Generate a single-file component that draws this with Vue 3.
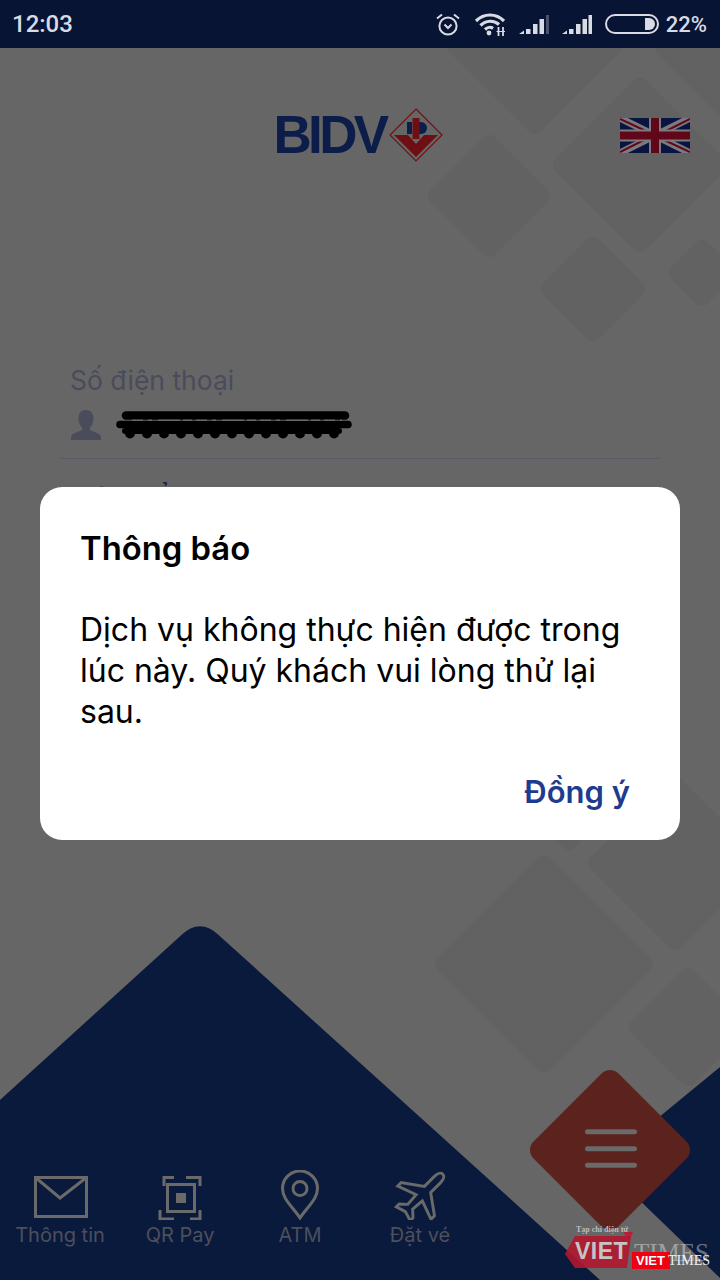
<script setup>
// background tiles: center x, center y, half diagonal
const tiles = [
  [535, 46, 88], [489, 196, 61], [640, 165, 87], [593, 289, 52], [702, 273, 33], [760, 48, 105],
  [544, 964, 109], [675, 863, 87], [688, 1027, 59], [569, 820, 30]
]

function diamond(cx, cy, r) {
  return `${cx},${cy - r} ${cx + r},${cy} ${cx},${cy + r} ${cx - r},${cy}`
}

const tilePoints = tiles.map(([x, y, r]) => diamond(x, y, r - 8))

const navItems = ['Thông tin', 'QR Pay', 'ATM', 'Đặt vé']
</script>

<template>
  <div class="page">
    <!-- decorative background -->
    <svg class="backdrop" width="720" height="1280" viewBox="0 0 720 1280">
      <polygon
        v-for="(pts, i) in tilePoints"
        :key="i"
        :points="pts"
        fill="#626262"
        stroke="#626262"
        stroke-width="16"
        stroke-linejoin="round"
      />
      <path d="M0 1100L182 934.5Q200 918 218 934.5L600 1280H0Z" fill="#0a1a3d" />
      <path d="M720 1067L602 1164L720 1278Z" fill="#0a1a3d" />
    </svg>

    <header class="status">
      <span class="clock">12:03</span>
      <div class="status-icons">
        <svg class="ic-alarm" width="26" height="24" viewBox="0 0 26 24" fill="none" stroke="#d9dbe4" stroke-width="2">
          <circle cx="13" cy="14" r="8.6" />
          <path d="M9.5 12.5L13 16l3.5-3.5" />
          <path d="M2 6.5L7 2.5M24 6.5L19 2.5" />
        </svg>
        <svg class="ic-wifi" width="32" height="24" viewBox="0 0 32 24" fill="none" stroke="#d9dbe4" stroke-width="3.200">
          <path d="M2 9C10 1 22 1 30 9" />
          <path d="M6.500 13.500C12 8 20 8 25 12.500" />
          <path d="M11 17.500C13.500 15 17 15 19 16.500" />
          <circle cx="15" cy="21" r="2.400" fill="#d9dbe4" stroke="none" />
          <path d="M24.500 15v9M29 15v9" stroke-width="1.800" />
          <path d="M22.500 19.500h8.500" stroke-width="1" />
        </svg>
        <svg class="ic-signal" width="30" height="21" viewBox="0 0 30 21">
          <path d="M0 20L5 16.500V20Z M7 15h4.500v5H7Z M14 10h4.500v10H14Z M20.500 5H25v15h-4.500Z" fill="#d9dbe4" />
          <rect x="27" y="1" width="3" height="19" fill="#4a5068" />
        </svg>
        <svg class="ic-signal" width="30" height="21" viewBox="0 0 30 21">
          <path d="M0 20L5 16.500V20Z M7 15h4.500v5H7Z M14 10h4.500v10H14Z M20.500 5H25v15h-4.500Z" fill="#d9dbe4" />
          <rect x="26.500" y="1" width="3.500" height="19" fill="#d9dbe4" />
        </svg>
        <svg class="ic-battery" width="54" height="20" viewBox="0 0 54 20">
          <rect x="1" y="1" width="52" height="18" rx="9" fill="none" stroke="#d9dbe4" stroke-width="2" />
          <path d="M40 4h4a6 6 0 0 1 0 12h-4Z" fill="#d9dbe4" />
        </svg>
        <span class="percent">22%</span>
      </div>
    </header>

    <div class="brand-row">
      <div></div>
      <div class="logo">
        <span class="logo-text">BIDV</span>
        <svg width="54" height="54" viewBox="0 0 54 54">
          <polygon points="27,1 53,27 27,53 1,27" fill="none" stroke="#6e1215" stroke-width="1.200" />
          <polygon points="5,27 19,27 27,36 35,27 49,27 27,49" fill="#6e1013" />
          <path d="M18 14h5v12h-5Z" fill="#0c1d4a" />
          <path d="M30 14h2a6 6 0 0 1 0 12h-2Z" fill="#0c1d4a" />
          <rect x="23.500" y="10" width="7" height="21" fill="#6e1013" />
        </svg>
      </div>
      <svg class="flag" width="70" height="35" viewBox="0 0 70 35">
        <rect width="70" height="35" fill="#0a1440" />
        <path d="M0 0L70 35M70 0L0 35" stroke="#7b7b7f" stroke-width="7" />
        <path d="M0 1L28 14M70 1L44 14M0 34L26 21M70 34L42 21" stroke="#62071a" stroke-width="2" />
        <path d="M35 0V35M0 17.500H70" stroke="#7b7b7f" stroke-width="12" />
        <path d="M35 0V35M0 17.500H70" stroke="#62071a" stroke-width="8" />
      </svg>
    </div>

    <section class="form">
      <label class="field-label">Số điện thoại</label>
      <div class="field-row">
        <svg class="person" width="30" height="30" viewBox="0 0 30 30">
          <path d="M15 0c5 0 7.500 3.500 7.500 8.500 0 4-1.500 7-3.500 9v2.500l8 3.500c2 1 3 2.500 3 4.500V30H0v-2c0-2 1-3.500 3-4.500L11 20v-2.500c-2-2-3.500-5-3.500-9C7.500 3.500 10 0 15 0Z" fill="#4a4c5c" />
        </svg>
        <svg class="scribble" width="240" height="32" viewBox="0 0 240 32" fill="none" stroke="#000" stroke-linecap="round">
          <path d="M10 6.500H229" stroke-width="8.500" />
          <path d="M4 15.500H232" stroke-width="7.500" />
          <path d="M9 22H223" stroke-width="6" />
          <path d="M14 24.500H222" stroke-width="10" stroke-dasharray="0 17" />
          <path d="M16 11.200H226" stroke="#666" stroke-width="1.500" stroke-linecap="butt" stroke-dasharray="11 5 4 6 22 3 9 4" />
        </svg>
      </div>
      <div class="divider"></div>
      <label class="password-label">Mật khẩu</label>
    </section>

    <nav class="bottom-nav">
      <div v-for="(item, i) in navItems" :key="item" class="nav-item">
        <svg width="60" height="50" viewBox="0 0 60 50" fill="none" stroke="#6a6a6a" stroke-width="3">
          <template v-if="i === 0">
            <rect x="5.500" y="7.500" width="51" height="39" />
            <path d="M5.500 7.500L30 28L56.500 7.500" />
          </template>
          <template v-else-if="i === 1">
            <path d="M14 16V7.500H24M36 7.500H50V16M50 40V49H40M24 49H10V40" />
            <rect x="17.500" y="14.500" width="27" height="27" stroke-width="3" />
            <rect x="26" y="23" width="10" height="10" fill="#6a6a6a" stroke="none" />
          </template>
          <template v-else-if="i === 2">
            <path d="M30 48C22 36 12.500 29 12.500 18.500A17.500 17.500 0 0 1 47.500 18.500C47.500 29 38 36 30 48Z" />
            <circle cx="30" cy="18.500" r="7" />
          </template>
          <template v-else>
            <path transform="translate(32 25) rotate(45) scale(.98)" d="M0-30C3-30 4.500-26 4.500-22V-8L24 6V11L4.500 4L3.500 17L10 23V27L0 24L-10 27V23L-3.500 17L-4.500 4L-24 11V6L-4.500-8V-22C-4.500-26-3-30 0-30Z" />
          </template>
        </svg>
        <span class="nav-label">{{ item }}</span>
      </div>
    </nav>

    <button class="menu-fab">
      <svg width="170" height="170" viewBox="0 0 170 170">
        <polygon points="85,17 153,85 85,153 17,85" fill="#5c221e" stroke="#5c221e" stroke-width="24" stroke-linejoin="round" />
        <path d="M62.500 66.700H109.500M62.500 83.700H109.500M62.500 100.300H109.500" stroke="#6a6a6a" stroke-width="5" stroke-linecap="round" />
      </svg>
    </button>

    <!-- watermark -->
    <div class="wm">
      <span class="wm-top">Tạp chí điện tử</span>
      <svg class="wm-flag" width="74" height="38" viewBox="0 0 74 38">
        <path d="M58 0H68L64 8Z" fill="#b81f38" />
        <path d="M10 4H66L62 36H10L0 22Z" fill="#b3172f" opacity=".9" />
      </svg>
      <span class="wm-viet">VIET</span>
      <span class="wm-times">TIMES</span>
      <span class="wm-red"></span>
      <span class="wm-viet-sm">VIET</span>
      <span class="wm-times-sm">TIMES</span>
    </div>

    <div class="dialog">
      <h2 class="dialog-title">Thông báo</h2>
      <p class="dialog-body">Dịch vụ không thực hiện được trong lúc này. Quý khách vui lòng thử lại sau.</p>
      <div class="dialog-actions">
        <button class="dialog-btn">Đồng ý</button>
      </div>
    </div>
  </div>
</template>

<style scoped>
.page {
  position: relative;
  width: 720px;
  height: 1280px;
  overflow: hidden;
  display: flex;
  flex-direction: column;
  background: #666;
  font-family: Inter, sans-serif;
}

.backdrop {
  position: absolute;
  left: 0;
  top: 0;
}

.status {
  position: relative;
  height: 48px;
  flex: none;
  display: flex;
  align-items: center;
  justify-content: space-between;
  padding: 0 13px 0 12px;
  box-sizing: border-box;
  background: #071433;
  color: #d9dbe4;
  font-family: Roboto, sans-serif;
  font-weight: 500;
}

.clock {
  font-size: 24px;
}

.status-icons {
  display: flex;
  align-items: center;
}

.ic-alarm {
  margin-right: 13px;
}

.ic-wifi {
  margin-right: 13px;
}

.ic-signal {
  margin-right: 13px;
}

.ic-battery {
  margin-right: 7px;
}

.percent {
  font-size: 22px;
}

.brand-row {
  position: relative;
  margin-top: 60px;
  display: grid;
  grid-template-columns: 1fr auto 1fr;
  align-items: center;
  height: 54px;
  padding-right: 30px;
}

.logo {
  display: flex;
  align-items: center;
  margin-left: 26px;
}

.logo-text {
  font-family: 'Liberation Sans', sans-serif;
  font-weight: 700;
  font-size: 53px;
  line-height: 54px;
  letter-spacing: -3.6px;
  color: #0c1d4a;
  margin-right: 3px;
}

.flag {
  justify-self: end;
}

.form {
  position: relative;
  margin: 200px 60px 0;
}

.field-label {
  display: block;
  margin-left: 10px;
  font-size: 26.500px;
  line-height: 36px;
  color: #4a4c5b;
}

.field-row {
  display: flex;
  align-items: center;
  margin: 12px 0 0 11px;
  height: 30px;
}

.scribble {
  margin-left: 15px;
}

.divider {
  height: 1px;
  margin-top: 18px;
  background: #585a68;
}

.password-label {
  display: block;
  margin: 20px 0 0 10px;
  font-size: 26.500px;
  line-height: 36px;
  color: #12224a;
}

.bottom-nav {
  position: relative;
  margin-top: auto;
  display: grid;
  grid-template-columns: repeat(4, 120px);
  padding-bottom: 31px;
}

.nav-item {
  display: flex;
  flex-direction: column;
  align-items: center;
}

.nav-label {
  margin-top: 1px;
  font-size: 20px;
  line-height: 28px;
  color: #4d4f5b;
}

.menu-fab {
  position: absolute;
  left: 525px;
  top: 1065px;
  width: 170px;
  height: 170px;
  padding: 0;
  border: none;
  background: none;
}

.wm {
  position: absolute;
  left: 560px;
  top: 1220px;
  width: 160px;
  height: 60px;
}

.wm span {
  position: absolute;
  white-space: nowrap;
}

.wm-flag {
  position: absolute;
  left: 5px;
  top: 12px;
}

.wm-top {
  left: 16px;
  top: 5px;
  font-family: 'Liberation Serif', serif;
  font-weight: 700;
  font-size: 8px;
  line-height: 10px;
  color: #bdbdbd;
}

.wm-viet {
  left: 15px;
  top: 17px;
  font-family: 'Liberation Sans', sans-serif;
  font-weight: 700;
  font-size: 23px;
  line-height: 28px;
  letter-spacing: .5px;
  color: #c4c4c4;
}

.wm-times {
  left: 74px;
  top: 18px;
  font-family: 'Liberation Serif', serif;
  font-size: 25px;
  line-height: 30px;
  color: rgba(255, 255, 255, .4);
}

.wm-red {
  left: 72px;
  top: 32px;
  width: 38px;
  height: 17px;
  background: #f00012;
}

.wm-viet-sm {
  left: 76px;
  top: 32px;
  font-family: 'Liberation Sans', sans-serif;
  font-weight: 700;
  font-size: 13px;
  line-height: 17px;
  color: #fff;
}

.wm-times-sm {
  left: 108px;
  top: 32px;
  font-family: 'Liberation Serif', serif;
  font-size: 14px;
  line-height: 17px;
  color: #f2f2f2;
}

.dialog {
  position: absolute;
  left: 40px;
  top: 487px;
  width: 640px;
  height: 353px;
  box-sizing: border-box;
  padding: 40px 30px 0 40px;
  border-radius: 22px;
  background: #fff;
  color: #000;
}

.dialog-title {
  margin: 0;
  font-size: 32.800px;
  font-weight: 600;
  line-height: 42px;
}

.dialog-body {
  margin: 40px 0 0;
  font-size: 32px;
  line-height: 41px;
}

.dialog-actions {
  display: flex;
  justify-content: flex-end;
  margin: 39px 20px 0 0;
}

.dialog-btn {
  padding: 0;
  border: none;
  background: none;
  font-family: inherit;
  font-size: 31px;
  font-weight: 600;
  line-height: 42px;
  color: #1d3c8f;
}
</style>
